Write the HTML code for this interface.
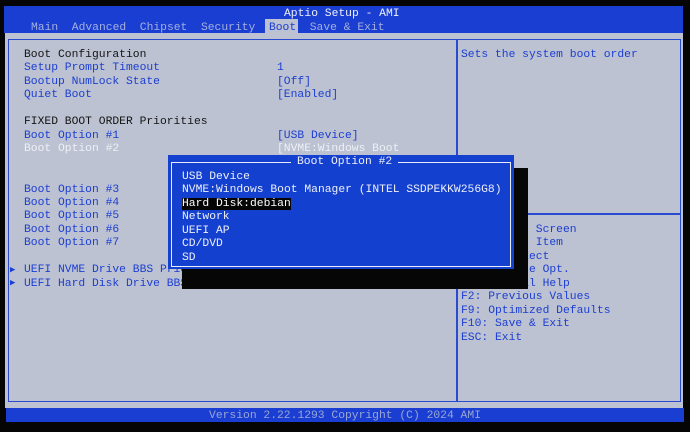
<!DOCTYPE html>
<html><head><meta charset="utf-8"><style>
*{margin:0;padding:0}
body{width:690px;height:432px;background:#050505;position:relative;overflow:hidden;font-family:"Liberation Mono",monospace;font-size:11.33px;}
.a{position:absolute;white-space:pre;line-height:13.45px}
.b{color:#1c3ed0}
.w{color:#eef0f6}
.k{color:#141414}
</style></head><body>
<div class="a" style="left:4px;top:6px;width:679px;height:27px;background:#1a3ed2"></div>
<div class="a" style="left:5px;top:33px;width:678px;height:375px;background:#bcc2d2"></div>
<div class="a" style="left:8px;top:39px;width:671px;height:361px;border:1.5px solid #2a4ad0"></div>
<div class="a" style="left:456px;top:39px;width:1.5px;height:362px;background:#2a4ad0"></div>
<div class="a" style="left:457px;top:213px;width:223px;height:1.5px;background:#2a4ad0"></div>
<div class="a" style="left:6px;top:408px;width:678px;height:14px;background:#1a3ed2"></div>
<div class="a" style="left:0;top:410px;width:690px;text-align:center;color:#9aa6d4">Version 2.22.1293 Copyright (C) 2024 AMI</div>
<div class="a" style="left:284px;top:8px;color:#eef0f8">Aptio Setup - AMI</div>
<div class="a" style="left:265px;top:19px;width:33px;height:14px;background:#bcc2d2"></div>
<div class="a" style="left:31px;top:21.5px;color:#a4b0de">Main  Advanced  Chipset  Security  <span style="color:#1c3ed0">Boot</span>  Save &amp; Exit</div>

<div class="a" style="left:24px;top:49px"><span class="k">Boot Configuration</span>
<span class="b">Setup Prompt Timeout</span>
<span class="b">Bootup NumLock State</span>
<span class="b">Quiet Boot</span>

<span class="k">FIXED BOOT ORDER Priorities</span>
<span class="b">Boot Option #1</span>
<span class="w">Boot Option #2</span>


<span class="b">Boot Option #3</span>
<span class="b">Boot Option #4</span>
<span class="b">Boot Option #5</span>
<span class="b">Boot Option #6</span>
<span class="b">Boot Option #7</span>

<span class="b">UEFI NVME Drive BBS Priorities</span>
<span class="b">UEFI Hard Disk Drive BBS Priorities</span></div>
<div class="a b" style="left:10px;top:264px;font-size:9px;line-height:13.45px">▶
▶</div>
<div class="a" style="left:277px;top:62.45px"><span class="b">1</span>
<span class="b">[Off]</span>
<span class="b">[Enabled]</span>


<span class="b">[USB Device]</span>
<span class="w">[NVME:Windows Boot</span></div>
<div class="a b" style="left:461px;top:49px">Sets the system boot order</div>
<div class="a b" style="left:461px;top:224px">→←: Select Screen
↑↓: Select Item
Enter: Select
+/-: Change Opt.
F1: General Help
F2: Previous Values
F9: Optimized Defaults
F10: Save &amp; Exit
ESC: Exit</div>

<div class="a" style="left:182px;top:168px;width:346px;height:121px;background:#060606"></div>
<div class="a" style="left:168px;top:155px;width:346px;height:114px;background:#1440d0"></div>
<div class="a" style="left:171px;top:162px;width:338px;height:103px;border:1.5px solid #e8ecf8"></div>
<div class="a" style="left:291px;top:156px;background:#1440d0;color:#eef0f8;padding:0 6px">Boot Option #2</div>
<div class="a" style="left:182px;top:170.8px;color:#eef0f8">USB Device
NVME:Windows Boot Manager (INTEL SSDPEKKW256G8)
<span style="background:#050505;color:#fff">Hard Disk:debian</span>
Network
UEFI AP
CD/DVD
SD</div>
</body></html>
